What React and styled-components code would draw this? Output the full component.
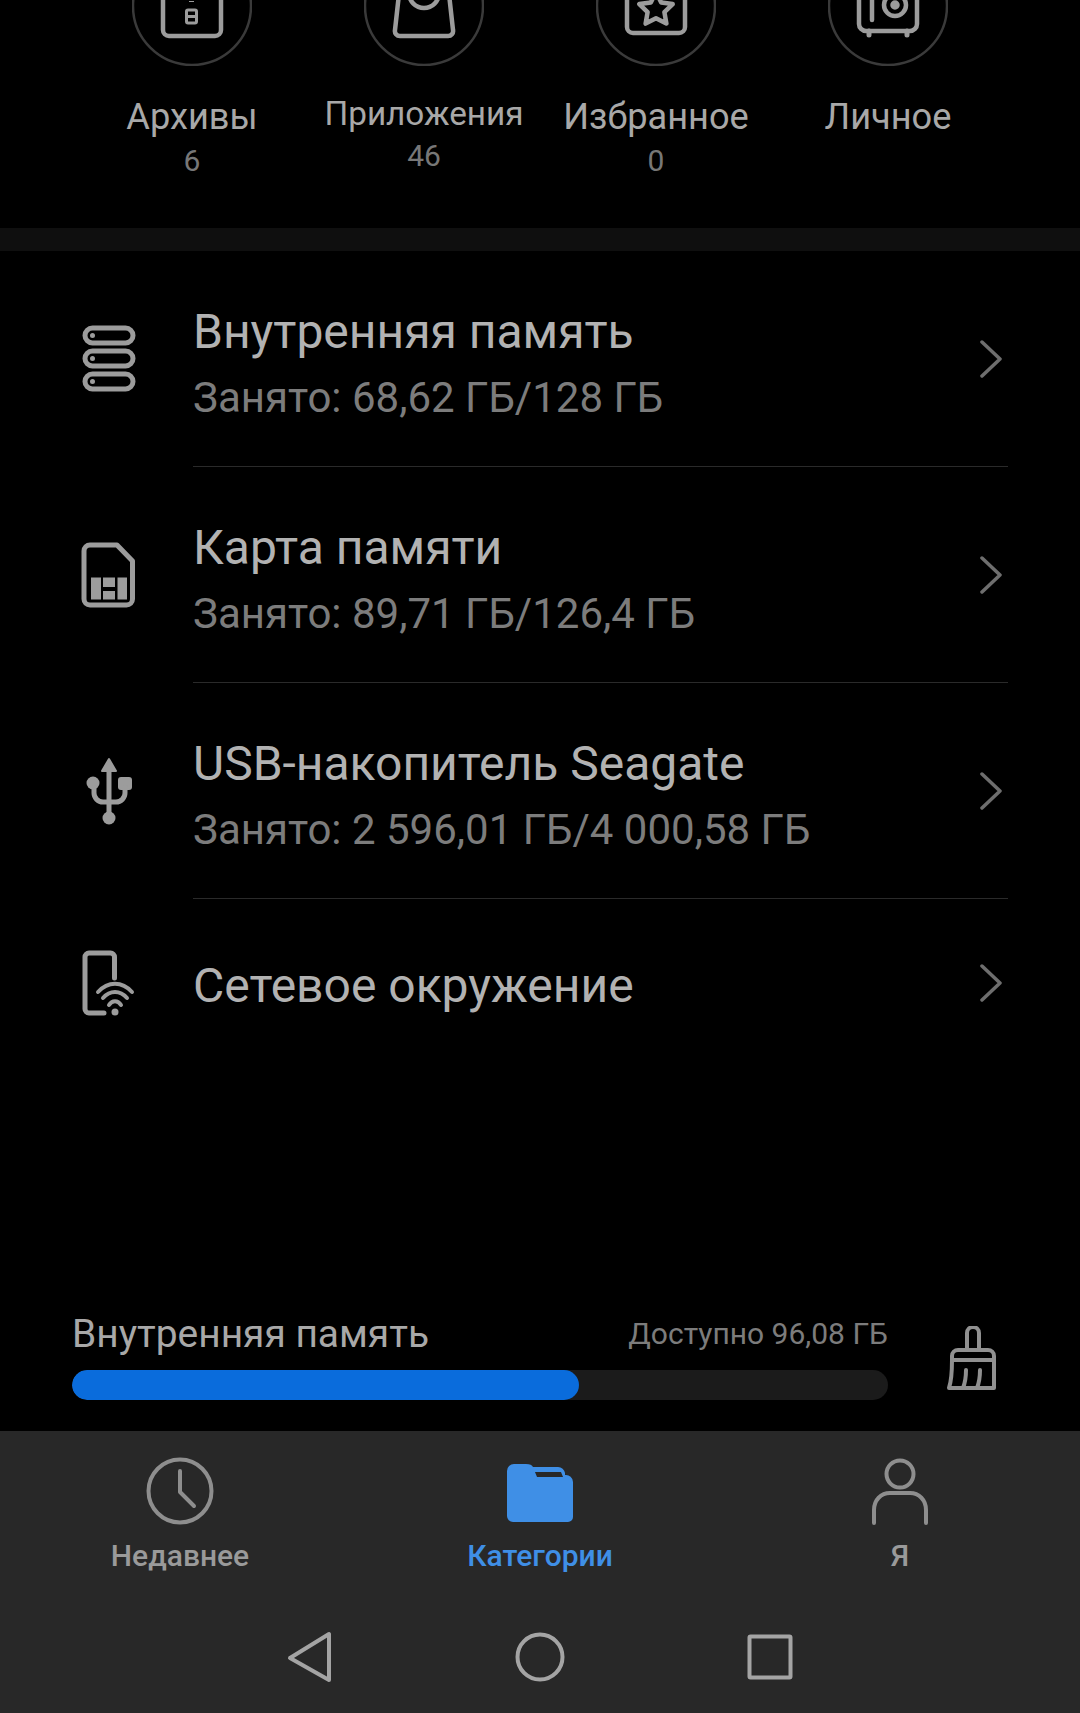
import React from "react";
import styled, {createGlobalStyle} from "styled-components";

const GlobalStyle = createGlobalStyle`
  html, body {
    margin: 0;
    padding: 0;
    background: #000000;
  }
  * {
    box-sizing: border-box;
  }
`;

const Page = styled.div`
  display: flex;
  flex-direction: column;
  width: 1080px;
  height: 1713px;
  overflow: hidden;
  background: #000000;
  font-family: Roboto, "Noto Sans", sans-serif;
`;

const CategoryGrid = styled.div`
  display: grid;
  grid-template-columns: repeat(4, 232px);
  height: 228px;
  padding-left: 76px;
`;

const Category = styled.div`
  display: flex;
  flex-direction: column;
  align-items: center;
`;

const CircleClip = styled.div`
  display: flex;
  align-items: flex-end;
  height: 66px;
  overflow: hidden;
`;

const CategoryLabel = styled.div`
  margin-top: ${({$small}) => ($small ? "27px" : "30px")};
  font-size: ${({$small}) => ($small ? "33.3px" : "36.2px")};
  line-height: 42px;
  color: #a8a8a8;
  white-space: nowrap;
`;

const CategoryCount = styled.div`
  margin-top: ${({$small}) => ($small ? "4px" : "6px")};
  font-size: 30px;
  line-height: 34px;
  color: #777777;
`;

const BandDivider = styled.div`
  height: 23px;
  background: #0f0f0f;
`;

const Row = styled.div`
  display: flex;
  height: ${({$short}) => ($short ? "168px" : "216px")};
`;

const RowIcon = styled.div`
  display: flex;
  align-items: center;
  flex-shrink: 0;
  width: 193px;
  padding-left: 74px;
`;

const RowBody = styled.div`
  display: flex;
  flex: 1;
  align-items: center;
  justify-content: space-between;
  margin-right: 72px;
  padding-right: 5px;
  border-bottom: ${({$last}) => ($last ? "none" : "1px solid #2a2a2a")};
`;

const RowText = styled.div`
  display: flex;
  flex-direction: column;
  padding-top: ${({$single}) => ($single ? "6px" : "10px")};
`;

const RowTitle = styled.div`
  font-size: 48px;
  line-height: 52px;
  color: #b2b2b2;
`;

const RowSub = styled.div`
  margin-top: 17px;
  font-size: 42px;
  line-height: 46px;
  color: #7c7c7c;
`;

const Storage = styled.div`
  display: flex;
  align-items: flex-end;
  margin-top: auto;
  padding: 0 0 31px 72px;
`;

const StorageInfo = styled.div`
  display: flex;
  flex-direction: column;
  width: 816px;
`;

const StorageHead = styled.div`
  display: flex;
  justify-content: space-between;
  align-items: center;
  height: 44px;
  margin-bottom: 15px;
`;

const StorageName = styled.div`
  font-size: 38.9px;
  color: #a8a8a8;
`;

const StorageFree = styled.div`
  font-size: 30px;
  color: #7c7c7c;
`;

const BarTrack = styled.div`
  height: 30px;
  border-radius: 15px;
  background: #1b1b1b;
  overflow: hidden;
`;

const BarFill = styled.div`
  height: 100%;
  border-radius: 15px;
  background: #0a6cdc;
`;

const BroomSlot = styled.div`
  display: flex;
  margin-left: 59px;
  margin-bottom: 10px;
`;

const BottomPanel = styled.div`
  display: flex;
  flex-direction: column;
  height: 282px;
  background: #282828;
`;

const Tabs = styled.div`
  display: grid;
  grid-template-columns: 360px 360px 360px;
  height: 158px;
`;

const Tab = styled.div`
  display: flex;
  flex-direction: column;
  align-items: center;
  padding-top: 26px;
`;

const TabIcon = styled.div`
  display: flex;
  height: 68px;
`;

const TabLabel = styled.div`
  margin-top: 14px;
  font-size: 30px;
  font-weight: 500;
  line-height: 34px;
  color: ${({$active}) => ($active ? "#3f8fe6" : "#9a9a9a")};
`;

const SystemBar = styled.div`
  display: flex;
  justify-content: center;
  align-items: center;
  flex: 1;
  gap: 182px;
  padding-top: 12px;
`;

const LineSvg = styled.svg`
  display: block;
  fill: none;
  stroke: ${({$color}) => $color || "#9c9c9c"};
  stroke-width: ${({$weight}) => $weight || 5};
  stroke-linecap: round;
  stroke-linejoin: round;
`;

const ArchiveIcon = () => (
  <LineSvg width="120" height="120" viewBox="0 0 120 120" $weight={4.5}>
    <circle cx="60" cy="60" r="59" stroke="#3a3a3a" strokeWidth="2.5" />
    <rect x="31" y="28" width="58" height="62" rx="6" />
    <rect x="54.5" y="64" width="10" height="13" rx="1.5" strokeWidth="3" />
    <path d="M54.5 70.5h10" strokeWidth="3" />
    <path d="M59.5 46v10" strokeWidth="5" strokeDasharray="4 5" strokeLinecap="butt" />
  </LineSvg>
);

const AppsIcon = () => (
  <LineSvg width="120" height="120" viewBox="0 0 120 120" $weight={4.5}>
    <circle cx="60" cy="60" r="59" stroke="#3a3a3a" strokeWidth="2.5" />
    <path d="M37 30h46l6 54a5 5 0 0 1-5 6H36a5 5 0 0 1-5-6z" />
    <path d="M45 47a15 15 0 0 0 30 0" />
  </LineSvg>
);

const FavoriteIcon = () => (
  <LineSvg width="120" height="120" viewBox="0 0 120 120" $weight={4.5}>
    <circle cx="60" cy="60" r="59" stroke="#3a3a3a" strokeWidth="2.5" />
    <rect x="31" y="26" width="58" height="61" rx="6" />
    <path d="M60 46l5.2 10.4 11.5 1.7-8.3 8.1 2 11.4L60 72.2l-10.4 5.4 2-11.4-8.3-8.1 11.5-1.7z" />
  </LineSvg>
);

const SafeIcon = () => (
  <LineSvg width="120" height="120" viewBox="0 0 120 120" $weight={4.5}>
    <circle cx="60" cy="60" r="59" stroke="#3a3a3a" strokeWidth="2.5" />
    <rect x="31" y="26" width="58" height="59" rx="7" />
    <path d="M44 48v26" />
    <path d="M41 85v4M79 85v4" strokeWidth="5" />
    <circle cx="67" cy="59" r="11" />
    <circle cx="67" cy="59" r="2.5" fill="#9c9c9c" />
  </LineSvg>
);

const ServerIcon = () => (
  <LineSvg width="70" height="80" viewBox="0 0 70 80">
    <rect x="11" y="9" width="48" height="15" rx="7.5" />
    <rect x="11" y="32" width="48" height="15" rx="7.5" />
    <rect x="11" y="55" width="48" height="15" rx="7.5" />
    <circle cx="18.5" cy="16.5" r="1.5" fill="#9c9c9c" strokeWidth="2" />
    <circle cx="18.5" cy="39.5" r="1.5" fill="#9c9c9c" strokeWidth="2" />
    <circle cx="18.5" cy="62.5" r="1.5" fill="#9c9c9c" strokeWidth="2" />
  </LineSvg>
);

const SimIcon = () => (
  <LineSvg width="70" height="80" viewBox="0 0 70 80">
    <path d="M16 10h27l15.5 16v38a6 6 0 0 1-6 6H16a6 6 0 0 1-6-6V16a6 6 0 0 1 6-6z" />
    <path
      d="M17 42.5h10v22H17zM29 42.5h12V52H29zM29 56h12v8.5H29zM43.5 42.5H53v22h-9.5z"
      fill="#9c9c9c"
      stroke="none"
    />
  </LineSvg>
);

const UsbIcon = () => (
  <LineSvg width="70" height="80" viewBox="0 0 70 80">
    <path d="M35 16v50" />
    <path d="M35 8l7 12H28z" fill="#9c9c9c" strokeWidth="2" />
    <circle cx="35" cy="67" r="6.5" fill="#9c9c9c" stroke="none" />
    <circle cx="19" cy="32" r="6.5" fill="#9c9c9c" stroke="none" />
    <rect x="44" y="26" width="14" height="13" rx="3" fill="#9c9c9c" stroke="none" />
    <path d="M20 36v6a9 9 0 0 0 9 9h13a9 9 0 0 0 9-9v-6" />
  </LineSvg>
);

const NetworkIcon = () => (
  <LineSvg width="70" height="80" viewBox="0 0 70 80">
    <path d="M40.5 35V14a4 4 0 0 0-4-4H15a4 4 0 0 0-4 4v52a4 4 0 0 0 4 4h15" />
    <path d="M24 49c10-11 24-11 34 0" strokeWidth="4" />
    <path d="M29 55c7-8 17-8 24 0" strokeWidth="4" />
    <path d="M35 62c3-5 9-5 12 0" strokeWidth="4" />
    <circle cx="41" cy="69" r="3.5" fill="#9c9c9c" stroke="none" />
  </LineSvg>
);

const Chevron = () => (
  <LineSvg width="24" height="38" viewBox="0 0 24 38" $color="#6e6e6e" $weight={3.5}>
    <path d="M3 2l18 17L3 36" />
  </LineSvg>
);

const BroomIcon = () => (
  <LineSvg width="52" height="64" viewBox="0 0 52 64" $color="#909090" $weight={4}>
    <path d="M20 24V7a6 6 0 0 1 12 0v17" />
    <path d="M5 34v-4a6 6 0 0 1 6-6h30a6 6 0 0 1 6 6v4" />
    <path d="M5 34h42v28H2c2-6 3-16 3-28z" />
    <path d="M19 44c0 7-1 13-3 18M33 44c0 7-1 13-3 18" />
  </LineSvg>
);

const ClockIcon = () => (
  <LineSvg width="68" height="68" viewBox="0 0 68 68" $color="#8e8e8e" $weight={4}>
    <circle cx="34" cy="34" r="31.5" />
    <path d="M34 14v21l14 14" />
  </LineSvg>
);

const FolderIcon = () => (
  <svg width="68" height="68" viewBox="0 0 68 68">
    <path
      d="M1 14a7 7 0 0 1 7-7h12c4 0 6 1 7 3h25a7 7 0 0 1 7 6v2a7 7 0 0 1 8 7v35a5 5 0 0 1-5 5H7a6 6 0 0 1-6-6z"
      fill="#3f8fe6"
    />
    <path d="M29 15h26l2 5H31z" fill="#282828" />
  </svg>
);

const PersonIcon = () => (
  <LineSvg width="60" height="68" viewBox="0 0 60 68" $color="#8e8e8e" $weight={4}>
    <circle cx="30" cy="17" r="13.5" />
    <path d="M4 66V53c0-10 7-17 16-17h20c9 0 16 7 16 17v13" />
  </LineSvg>
);

const BackIcon = () => (
  <LineSvg width="46" height="52" viewBox="0 0 46 52" $color="#a4a4a4" $weight={4}>
    <path d="M42 3v46L3 27z" />
  </LineSvg>
);

const HomeIcon = () => (
  <LineSvg width="50" height="50" viewBox="0 0 50 50" $color="#a4a4a4" $weight={4}>
    <circle cx="25" cy="25" r="22.5" />
  </LineSvg>
);

const SquareIcon = () => (
  <LineSvg width="46" height="46" viewBox="0 0 46 46" $color="#a4a4a4" $weight={4}>
    <rect x="2.5" y="2.5" width="41" height="41" rx="1" />
  </LineSvg>
);

const categories = [
  {label: "Архивы", count: "6", icon: <ArchiveIcon />},
  {label: "Приложения", count: "46", icon: <AppsIcon />, small: true},
  {label: "Избранное", count: "0", icon: <FavoriteIcon />},
  {label: "Личное", icon: <SafeIcon />},
];

const storages = [
  {
    title: "Внутренняя память",
    sub: "Занято: 68,62 ГБ/128 ГБ",
    icon: <ServerIcon />,
  },
  {
    title: "Карта памяти",
    sub: "Занято: 89,71 ГБ/126,4 ГБ",
    icon: <SimIcon />,
  },
  {
    title: "USB-накопитель Seagate",
    sub: "Занято: 2 596,01 ГБ/4 000,58 ГБ",
    icon: <UsbIcon />,
  },
];

const App = () => (
  <Page>
    <GlobalStyle />
    <CategoryGrid>
      {categories.map((item) => (
        <Category key={item.label}>
          <CircleClip>{item.icon}</CircleClip>
          <CategoryLabel $small={item.small}>{item.label}</CategoryLabel>
          {item.count && (
            <CategoryCount $small={item.small}>{item.count}</CategoryCount>
          )}
        </Category>
      ))}
    </CategoryGrid>
    <BandDivider />
    {storages.map((item) => (
      <Row key={item.title}>
        <RowIcon>{item.icon}</RowIcon>
        <RowBody>
          <RowText>
            <RowTitle>{item.title}</RowTitle>
            <RowSub>{item.sub}</RowSub>
          </RowText>
          <Chevron />
        </RowBody>
      </Row>
    ))}
    <Row $short>
      <RowIcon>
        <NetworkIcon />
      </RowIcon>
      <RowBody $last>
        <RowText $single>
          <RowTitle>Сетевое окружение</RowTitle>
        </RowText>
        <Chevron />
      </RowBody>
    </Row>
    <Storage>
      <StorageInfo>
        <StorageHead>
          <StorageName>Внутренняя память</StorageName>
          <StorageFree>Доступно 96,08 ГБ</StorageFree>
        </StorageHead>
        <BarTrack>
          <BarFill style={{width: `${(507 / 816) * 100}%`}} />
        </BarTrack>
      </StorageInfo>
      <BroomSlot>
        <BroomIcon />
      </BroomSlot>
    </Storage>
    <BottomPanel>
      <Tabs>
        <Tab>
          <TabIcon>
            <ClockIcon />
          </TabIcon>
          <TabLabel>Недавнее</TabLabel>
        </Tab>
        <Tab>
          <TabIcon>
            <FolderIcon />
          </TabIcon>
          <TabLabel $active>Категории</TabLabel>
        </Tab>
        <Tab>
          <TabIcon>
            <PersonIcon />
          </TabIcon>
          <TabLabel>Я</TabLabel>
        </Tab>
      </Tabs>
      <SystemBar>
        <BackIcon />
        <HomeIcon />
        <SquareIcon />
      </SystemBar>
    </BottomPanel>
  </Page>
);

export default App;
